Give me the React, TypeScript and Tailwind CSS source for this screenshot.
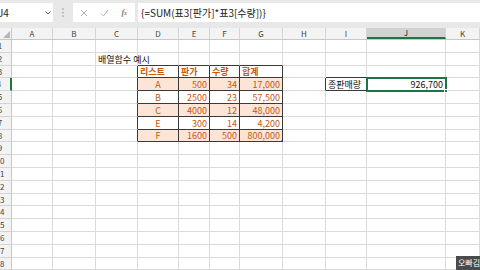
import React from "react";

const COLS = [12, 41, 43, 42, 41, 31, 30, 43, 43, 41, 79, 34];
const LETTERS = ["A", "B", "C", "D", "E", "F", "G", "H", "I", "J", "K"];
const ROWH = [13, 13, 12, 13, 13, 13, 13, 12, 13, 13, 13, 13, 12, 13, 13, 13, 13, 12];

const GRID = "#dadada";
const DARK = "#3a3a3a";
const OR = "#c65911";
const FILL = "#fce4d6";

type Cell = { t: string; align?: "l" | "c" | "r"; bold?: boolean; color?: string; bg?: string };

const table: Record<string, Cell> = {};
const hdr = ["리스트", "판가", "수량", "합계"];
const data = [
  ["A", "500", "34", "17,000"],
  ["B", "2500", "23", "57,500"],
  ["C", "4000", "12", "48,000"],
  ["E", "300", "14", "4,200"],
  ["F", "1600", "500", "800,000"],
];
hdr.forEach((h, i) => {
  table[`3-${4 + i}`] = { t: h, align: "l", bold: true, color: OR };
});
data.forEach((row, ri) => {
  row.forEach((v, ci) => {
    table[`${4 + ri}-${4 + ci}`] = {
      t: v,
      align: ci === 0 ? "c" : "r",
      color: OR,
      bg: ri % 2 === 0 ? FILL : undefined,
    };
  });
});
table["2-3"] = { t: "배열함수 예시", align: "l" };
table["4-9"] = { t: "종판매량", align: "l" };
table["4-10"] = { t: "926,700", align: "r" };

function inTable(r: number, c: number) {
  return r >= 3 && r <= 8 && c >= 4 && c <= 7;
}
function inBox(r: number, c: number) {
  return r === 4 && c === 9;
}
function rightDark(r: number, c: number) {
  return inTable(r, c) || inTable(r, c + 1) || inBox(r, c) || inBox(r, c + 1);
}
function bottomDark(r: number, c: number) {
  return inTable(r, c) || inTable(r + 1, c) || inBox(r, c) || inBox(r + 1, c);
}

export default function App() {
  const font = { fontFamily: '"Noto Sans CJK KR", "Noto Sans", sans-serif' };
  return (
    <div className="relative w-[480px] h-[270px] overflow-hidden bg-white" style={font}>
      {/* formula bar */}
      <div className="h-[28px] bg-[#e8e8e8] pt-[3px] flex items-start">
        <div className="w-[53px] h-[19px] bg-white flex items-center justify-between pr-[2px]">
          <span className="text-[10px] text-[#222] leading-none ml-[-2px]">J4</span>
          <svg width="6" height="4" viewBox="0 0 6 4">
            <path d="M0.5 0.5 L3 3 L5.5 0.5" fill="none" stroke="#555" strokeWidth="1" />
          </svg>
        </div>
        <div className="w-[20px] h-[19px] flex items-center justify-center">
          <svg width="2" height="9" viewBox="0 0 2 9">
            <circle cx="1" cy="1" r="0.8" fill="#9a9a9a" />
            <circle cx="1" cy="4.5" r="0.8" fill="#9a9a9a" />
            <circle cx="1" cy="8" r="0.8" fill="#9a9a9a" />
          </svg>
        </div>
        <div className="w-[62px] h-[19px] bg-white flex items-center">
          <div className="w-[20px] flex justify-center ml-[1px]">
            <svg width="8" height="8" viewBox="0 0 8 8">
              <path d="M1 1 L7 7 M7 1 L1 7" stroke="#b0b0b0" strokeWidth="1" />
            </svg>
          </div>
          <div className="w-[20px] flex justify-center">
            <svg width="9" height="8" viewBox="0 0 9 8">
              <path d="M1 4.5 L3.5 7 L8 1" fill="none" stroke="#b0b0b0" strokeWidth="1" />
            </svg>
          </div>
          <div className="w-[20px] flex justify-center">
            <span className="text-[9px] italic text-[#444] leading-none" style={{ fontFamily: '"Liberation Serif", serif' }}>
              f<span className="text-[6px]">x</span>
            </span>
          </div>
        </div>
        <div className="ml-[3px] flex-1 h-[19px] bg-white flex items-center pl-[3px]">
          <span className="text-[10px] text-[#222] leading-none whitespace-nowrap">{"{=SUM(표3[판가]*표3[수량])}"}</span>
        </div>
      </div>

      {/* column headers */}
      <div className="flex h-[12px] bg-[#f3f3f3] border-b border-[#c8c8c8]">
        <div className="w-[12px] h-full border-r border-[#c8c8c8] flex items-end justify-end pr-[1px] pb-[1px]">
          <svg width="7" height="7" viewBox="0 0 7 7">
            <path d="M7 0 L7 7 L0 7 Z" fill="#b5b5b5" />
          </svg>
        </div>
        {LETTERS.map((l, i) => (
          <div
            key={l}
            className={`h-full flex items-center justify-center text-[8px] leading-none border-r border-[#d4d4d4] ${
              l === "J" ? "bg-[#d2d2d2] border-b-2 border-b-[#217346] text-[#222]" : "text-[#444]"
            }`}
            style={{ width: COLS[i + 1] }}
          >
            {l}
          </div>
        ))}
      </div>

      {/* rows */}
      {ROWH.map((h, ri) => {
        const r = ri + 1;
        return (
          <div key={r} className="flex" style={{ height: h }}>
            <div
              className={`w-[12px] h-full overflow-hidden flex items-center justify-end bg-[#f3f3f3] border-b border-[#d4d4d4] ${
                r === 4 ? "border-r-2 border-r-[#217346] bg-[#d2d2d2]" : "border-r border-r-[#c8c8c8]"
              }`}
            >
              <span className="w-[22px] shrink-0 text-center text-[8px] leading-none text-[#444]">{r}</span>
            </div>
            {LETTERS.map((_, ci) => {
              const c = ci + 1;
              const cell = table[`${r}-${c}`];
              const rd = rightDark(r, c);
              const bd = bottomDark(r, c);
              return (
                <div
                  key={c}
                  className={`h-full flex items-center whitespace-nowrap border-r border-b px-[2px] ${
                    cell?.align === "r" ? "justify-end" : cell?.align === "c" ? "justify-center" : "justify-start"
                  }`}
                  style={{
                    width: COLS[c],
                    borderRightColor: rd ? DARK : GRID,
                    borderBottomColor: bd ? DARK : GRID,
                    background: cell?.bg,
                  }}
                >
                  {cell && (
                    <span
                      className={`text-[9px] leading-none ${cell.bold ? "font-bold" : ""}`}
                      style={{ color: cell.color ?? "#111" }}
                    >
                      {cell.t}
                    </span>
                  )}
                </div>
              );
            })}
          </div>
        );
      })}

      {/* selection on J4 */}
      <div className="absolute left-[366px] top-[77px] w-[81px] h-[15px] border-2 border-[#217346] pointer-events-none" />
      <div className="absolute left-[444px] top-[89px] w-[4px] h-[4px] bg-[#217346] border border-white" />
      {/* table resize handle */}
      <div className="absolute left-[280px] top-[139px] w-0 h-0 border-l-[3px] border-l-transparent border-b-[3px] border-b-[#1f3a93]" />

      {/* watermark */}
      <div className="absolute left-[456px] top-[256px] w-[30px] h-[14px] bg-[#4a4a4a] flex items-center pl-[2px]">
        <span className="text-[8px] leading-none text-white whitespace-nowrap">오빠김티</span>
      </div>
    </div>
  );
}
